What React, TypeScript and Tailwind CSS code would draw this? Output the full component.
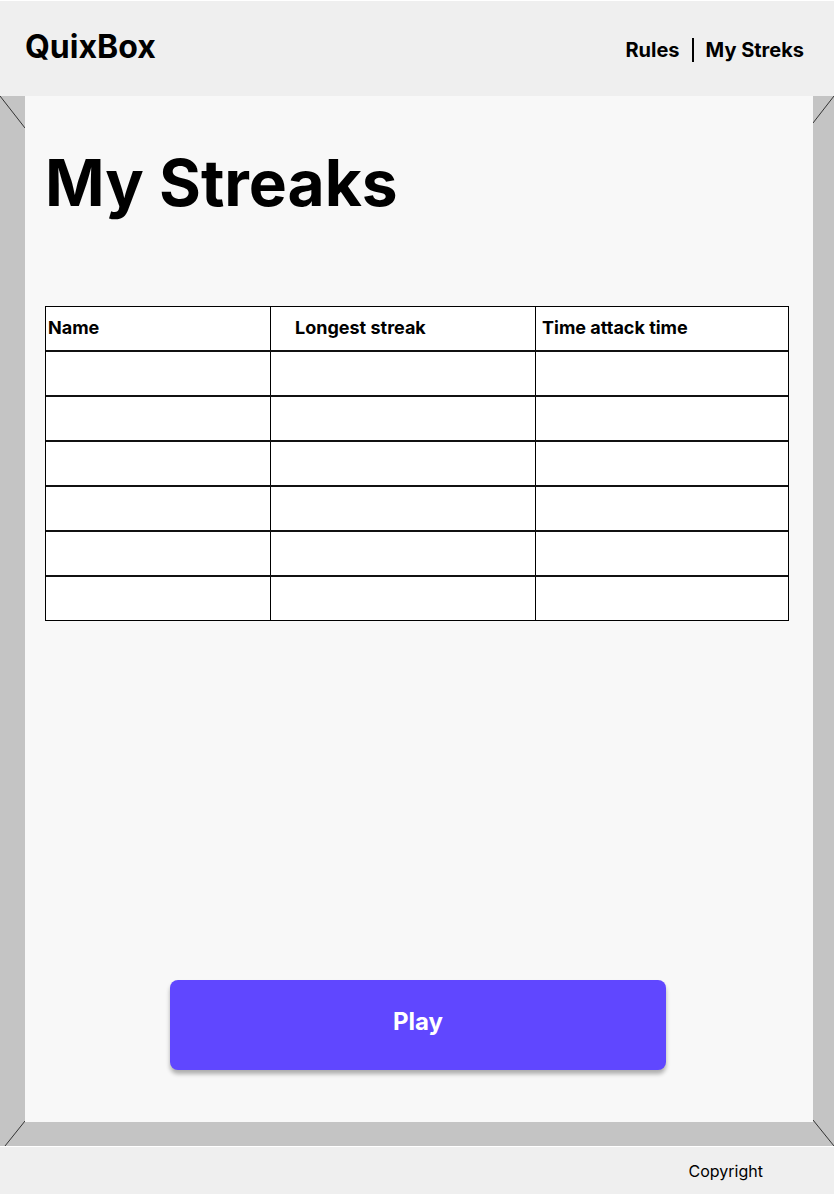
import React from "react";

const columns = [
  { label: "Name", className: "w-[224px] pl-[2px]" },
  { label: "Longest streak", className: "w-[265px] pl-[24px] border-l border-black" },
  { label: "Time attack time", className: "flex-1 pl-[6px] border-l border-black" },
];

const rows = Array.from({ length: 6 });

function Corner({ className, x1, y1, x2, y2, w, h }: { className: string; x1: number; y1: number; x2: number; y2: number; w: number; h: number }) {
  return (
    <svg className={`absolute ${className}`} width={w} height={h} viewBox={`0 0 ${w} ${h}`}>
      <line x1={x1} y1={y1} x2={x2} y2={y2} stroke="#333" strokeWidth="1" />
    </svg>
  );
}

function StreakTable() {
  return (
    <div className="w-[744px] border border-black bg-white">
      <div className="flex h-[45px] border-b-2 border-[#111]">
        {columns.map((c) => (
          <div key={c.label} className={`flex items-center pb-[2px] text-[18px] font-bold text-black ${c.className}`}>
            {c.label}
          </div>
        ))}
      </div>
      {rows.map((_, i) => (
        <div
          key={i}
          className={`flex ${i < rows.length - 1 ? "h-[45px] border-b-2 border-[#111]" : "h-[43px]"}`}
        >
          {columns.map((c) => (
            <div key={c.label} className={c.className} />
          ))}
        </div>
      ))}
    </div>
  );
}

export default function App() {
  return (
    <div className="flex h-[1194px] w-[834px] flex-col font-['Inter',sans-serif] text-black">
      {/* header */}
      <header className="flex h-[96px] justify-between border-t border-white bg-[#efefef] pl-[25px] pr-[30px]">
        <div className="pt-[30px] text-[32px] font-bold leading-none">QuixBox</div>
        <nav className="flex items-center gap-[12px] self-start pt-[37px] text-[20px] font-bold leading-none">
          <span>Rules</span>
          <span className="h-[24px] w-[2px] bg-black" />
          <span>My Streks</span>
        </nav>
      </header>

      {/* frame */}
      <div className="relative flex flex-1 border-b border-white bg-[#c4c4c4] pb-[24px] pl-[25px] pr-[21px]">
        <Corner className="left-0 top-0" w={25} h={32} x1={0} y1={0} x2={25} y2={32} />
        <Corner className="right-0 top-0" w={21} h={28} x1={0} y1={27} x2={21} y2={0} />
        <Corner className="bottom-0 left-0" w={25} h={25} x1={5} y1={25} x2={25} y2={0} />
        <Corner className="bottom-0 right-0" w={21} h={26} x1={0} y1={0} x2={21} y2={26} />

        <main className="flex flex-1 flex-col bg-[#f8f8f8] pb-[52px] pl-[20px] pr-[22px] pt-[55px]">
          <h1 className="text-[64px] font-bold leading-none">My Streaks</h1>
          <div className="mt-[91px]">
            <StreakTable />
          </div>
          <div className="flex-1" />
          <button className="mx-auto flex h-[90px] w-[496px] items-center justify-center rounded-[8px] bg-[#6047ff] pb-[6px] text-[24px] font-bold text-white shadow-[0_4px_4px_rgba(0,0,0,0.3)]">
            Play
          </button>
        </main>
      </div>

      {/* footer */}
      <footer className="flex h-[47px] items-center justify-end bg-[#efefef] pr-[71px] text-[16px]">
        Copyright
      </footer>
    </div>
  );
}
